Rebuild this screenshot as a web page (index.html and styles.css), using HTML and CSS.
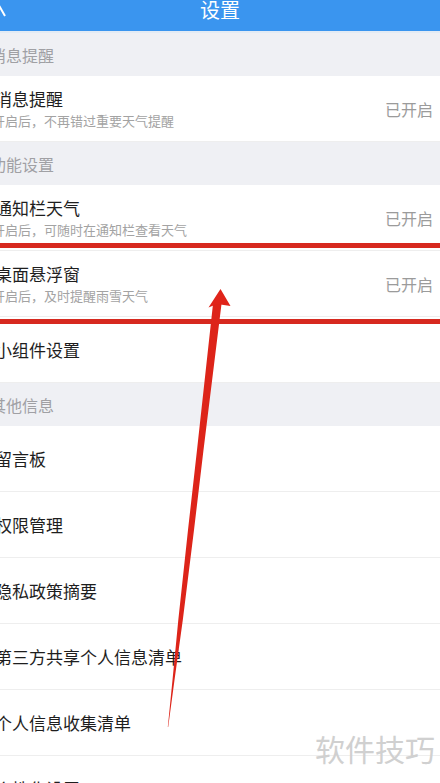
FILE: index.html
```html
<!DOCTYPE html>
<html lang="zh-CN">
<head>
<meta charset="utf-8">
<title>设置</title>
<link rel="stylesheet" href="styles.css">
</head>
<body>
<div class="screen">
  <header class="topbar">
    <svg class="back" width="12" height="31" viewBox="0 0 12 31"><polyline points="5,-10 -3,2 5,16" fill="none" stroke="#ffffff" stroke-width="2"/></svg>
    <h1 class="topbar-title">设置</h1>
    <span></span>
  </header>

  <div class="section"><span>消息提醒</span></div>
  <div class="row">
    <div class="row-text"><div class="title">消息提醒</div><div class="sub">开启后，不再错过重要天气提醒</div></div>
    <span class="state">已开启</span>
  </div>

  <div class="section"><span>功能设置</span></div>
  <div class="row">
    <div class="row-text"><div class="title">通知栏天气</div><div class="sub">开启后，可随时在通知栏查看天气</div></div>
    <span class="state">已开启</span>
  </div>
  <div class="row">
    <div class="row-text"><div class="title">桌面悬浮窗</div><div class="sub">开启后，及时提醒雨雪天气</div></div>
    <span class="state">已开启</span>
  </div>
  <div class="row">
    <div class="row-text"><div class="title">小组件设置</div></div>
  </div>

  <div class="section"><span>其他信息</span></div>
  <div class="row"><div class="row-text"><div class="title">留言板</div></div></div>
  <div class="row"><div class="row-text"><div class="title">权限管理</div></div></div>
  <div class="row"><div class="row-text"><div class="title">隐私政策摘要</div></div></div>
  <div class="row"><div class="row-text"><div class="title">第三方共享个人信息清单</div></div></div>
  <div class="row"><div class="row-text"><div class="title">个人信息收集清单</div></div></div>
  <div class="row"><div class="row-text"><div class="title">个性化设置</div></div></div>

  <div class="mark mark-top"></div>
  <div class="mark mark-bottom"></div>

  <svg class="arrow" width="440" height="783" viewBox="0 0 440 783">
    <polygon fill="#dd2419" points="213,304 197,450 188,530 178.3,620 172.5,680 167.8,727 168.2,727 174.5,680 182.8,620 194,530 203.5,450 221.5,304"/>
    <polygon fill="#e0241a" points="220.5,289 208.5,307.5 217,304 230.5,306"/>
  </svg>

  <div class="watermark">软件技巧</div>
</div>
</body>
</html>
```

FILE: styles.css
```css
html, body {
  margin: 0;
  padding: 0;
  background: #ffffff;
}

body {
  width: 440px;
  height: 783px;
  overflow: hidden;
  font-family: "Noto Sans CJK SC", "Noto Sans", sans-serif;
}

.screen {
  position: relative;
  width: 440px;
  height: 783px;
  overflow: hidden;
  background: #ffffff;
}

.topbar {
  display: grid;
  grid-template-columns: 1fr auto 1fr;
  align-items: start;
  height: 31px;
  background: #3a95ef;
  border-bottom: 2px solid #e3ebf4;
}

.back {
  display: block;
  margin-left: 0;
}

.topbar-title {
  margin: 0;
  font-size: 20px;
  line-height: 20px;
  font-weight: 400;
  color: #ffffff;
}

.section {
  display: flex;
  align-items: center;
  height: 43px;
  background: #eff0f4;
  font-size: 16px;
  color: #a0a0a4;
}

.section span {
  margin-left: -10px;
}

.row {
  display: flex;
  align-items: center;
  justify-content: space-between;
  height: 66px;
  box-sizing: border-box;
  border-bottom: 1px solid #eeeeee;
  padding-right: 7px;
}

.row-text {
  display: flex;
  flex-direction: column;
  margin-left: -5px;
}

.title {
  font-size: 17px;
  line-height: 22px;
  color: #1e1e1e;
}

.sub {
  margin-top: 2px;
  margin-left: -3px;
  font-size: 13px;
  line-height: 18px;
  color: #a3a3a3;
}

.state {
  font-size: 16px;
  color: #9b9b9b;
}

.mark {
  position: absolute;
  left: 0;
  right: 0;
  height: 5px;
  background: #d7291f;
}

.mark-top {
  top: 243px;
}

.mark-bottom {
  top: 319px;
}

.arrow {
  position: absolute;
  left: 0;
  top: 0;
}

.watermark {
  position: absolute;
  right: 5px;
  top: 728px;
  font-size: 30px;
  line-height: 40px;
  color: #d0d0d0;
}
```
